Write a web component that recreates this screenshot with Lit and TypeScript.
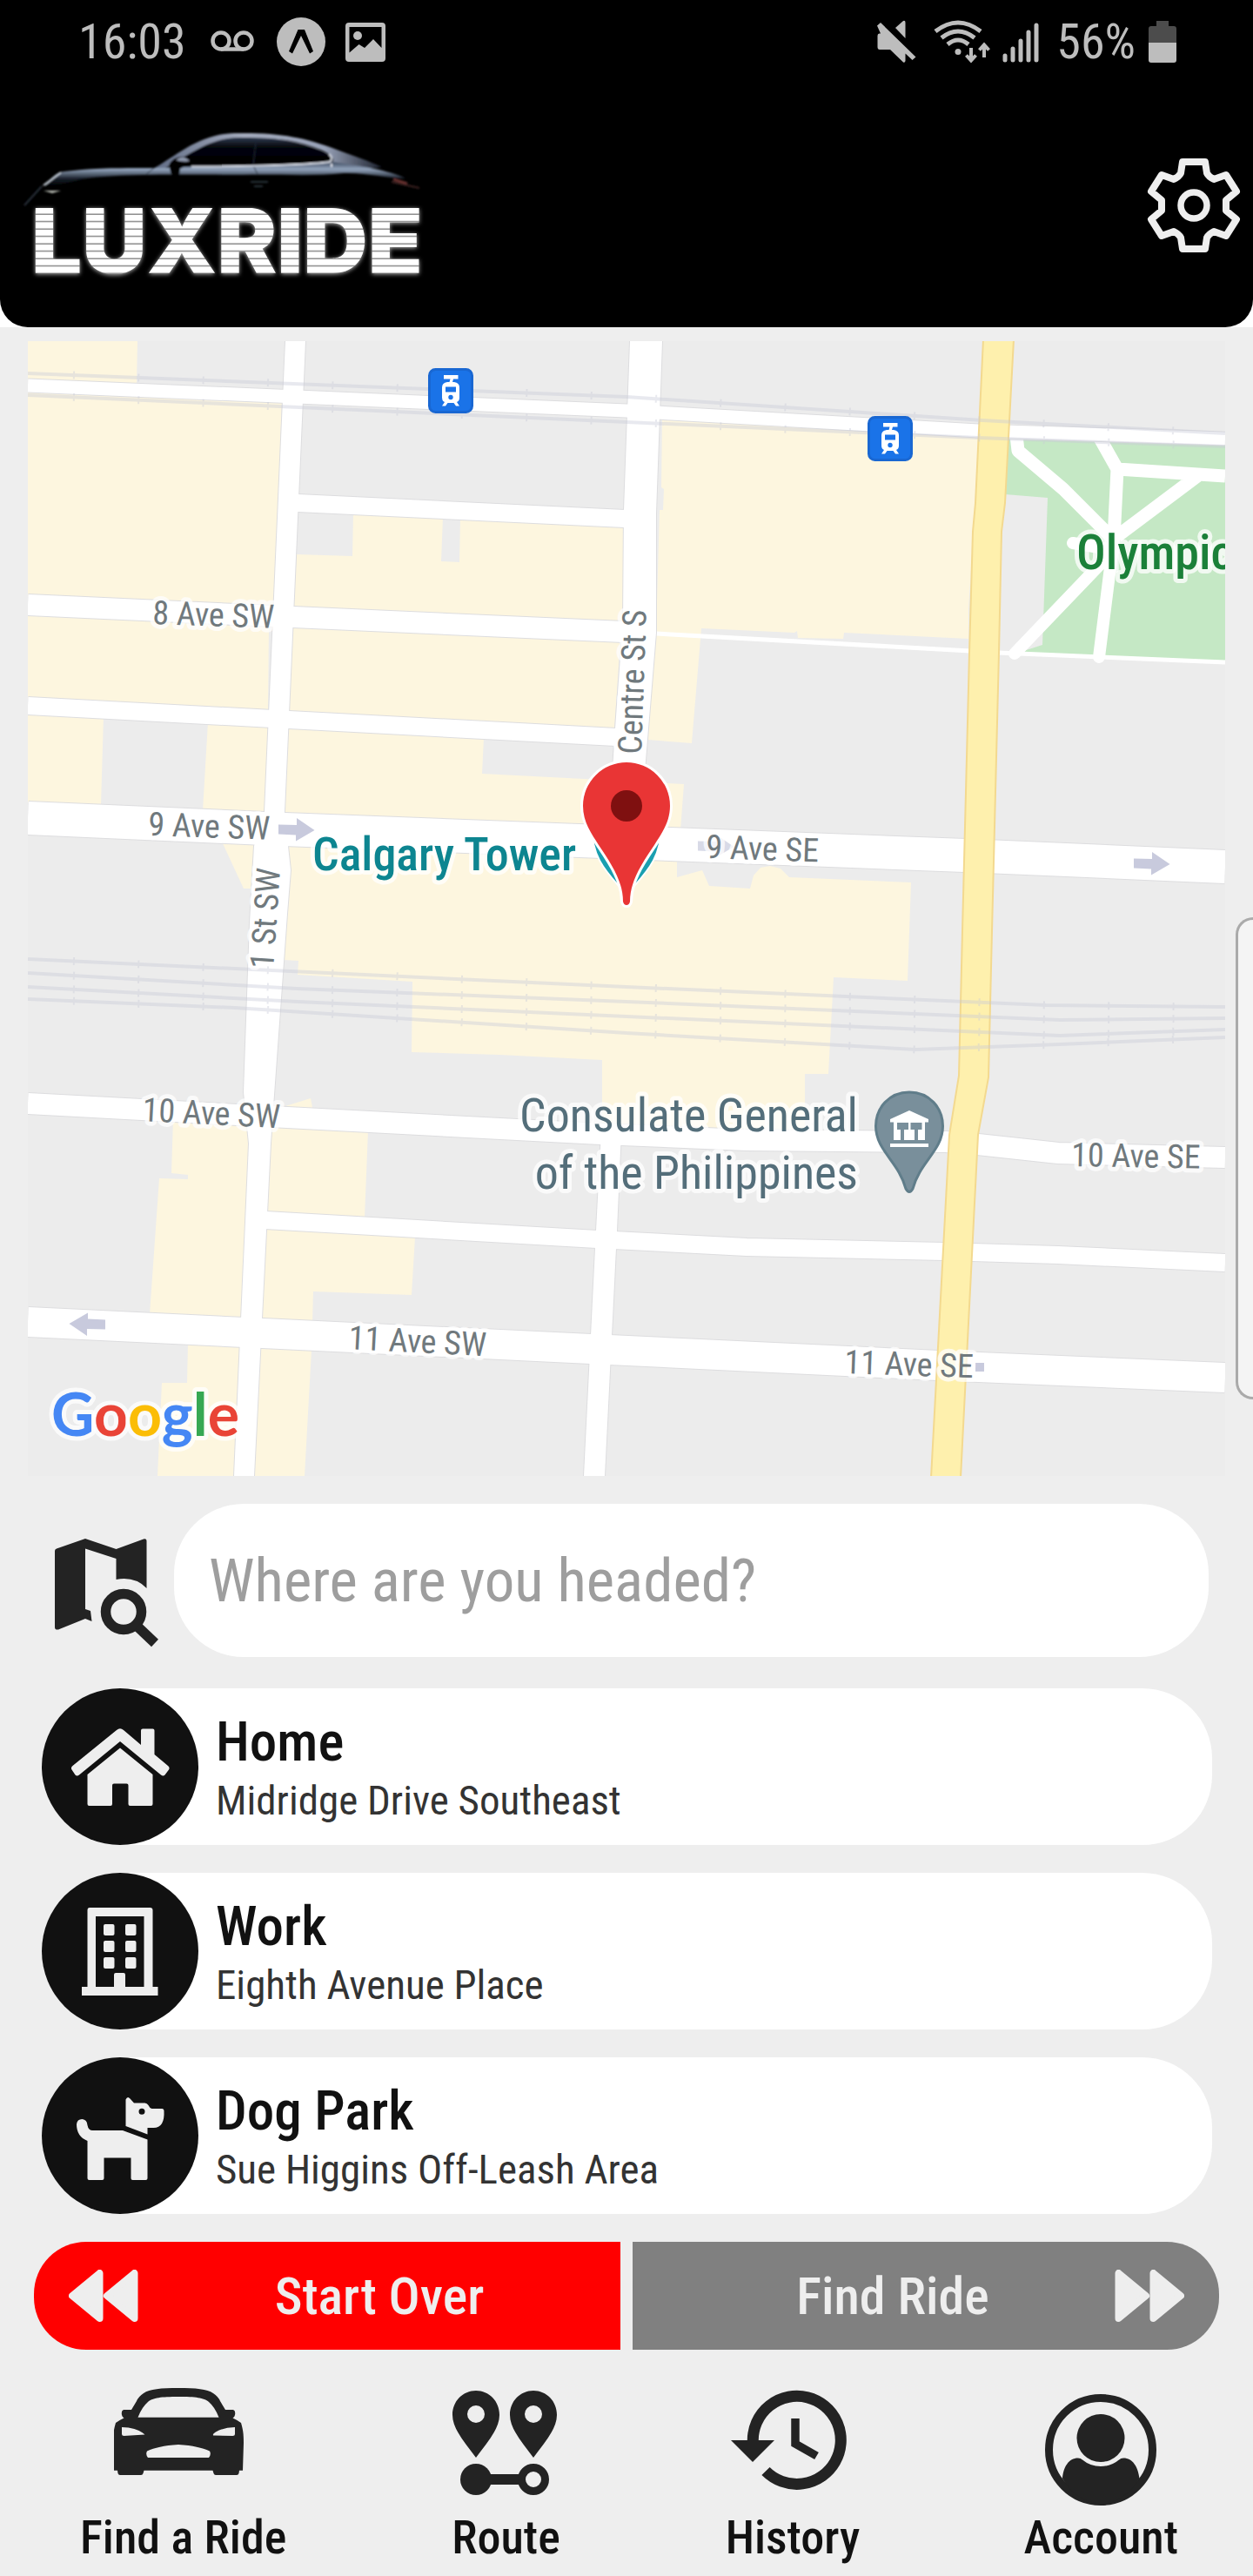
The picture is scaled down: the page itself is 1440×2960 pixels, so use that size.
import { LitElement, html, svg, css } from "lit";
import { customElement, state } from "lit/decorators.js";

type Place = { name: string; address: string; icon: unknown };
type Tab = { name: string; icon: unknown };

const homeIcon = svg`
  <path d="M86 48Q90 44.500 94 48L114 65V48.500Q114 46.500 116 46.500H127.500Q129.500 46.500 129.500 48.500V76L145 89Q147.500 91 146 93.500L141.500 99.500Q139.500 101.500 137 99.500L90 61L43 99.500Q40.500 101.500 38.500 99.500L34.500 93.500Q33 91 35.500 89Z"/>
  <path d="M90 68.500L127.500 99V133Q127.500 135 125.500 135H101.500Q99.500 135 99.500 133V111.500Q99.500 109.500 97.500 109.500H83Q81 109.500 81 111.500V133Q81 135 79 135H54.500Q52.500 135 52.500 133V99Z"/>`;

const workIcon = svg`
  <path fill-rule="evenodd" d="M55 40H124.500Q127.500 40 127.500 43V131H133.500V141H46V131H52.500V43Q52.500 40 55 40ZM62 50V131H83V117Q83 115 85 115H94Q96 115 96 117V131H117.500V50Z"/>
  ${[59, 78, 97].map((y) => svg`
    <rect x="71" y=${y} width="12.500" height="13" rx="2"/>
    <rect x="96" y=${y} width="12.500" height="13" rx="2"/>`)}`;

const dogIcon = svg`
  <path fill-rule="evenodd" d="M96.500 48.500Q98.500 44 101.500 47.500L106 52.500H118.500Q121 52.500 122.500 55Q124 58.500 126.500 59H138.500Q140.500 59 140.500 61.500Q141.500 81 128.500 81H121.500V88.500L96.500 79ZM115 58.800A3.500 3.500 0 1 0 115 65.800A3.500 3.500 0 1 0 115 58.800Z"/>
  <path d="M40 77Q40.500 71 46.500 71Q52 71.500 52.500 78Q53.500 84 58.500 84H93L121.500 94.500V139Q121.500 141 119.500 141H104.500Q102.500 141 102.500 139V115.500H71.500V139Q71.500 141 69.500 141H54.500Q52.500 141 52.500 139V96Q40 91 40 77Z"/>`;

const carIcon = svg`<g transform="translate(-1 4)">
  <path fill-rule="evenodd" d="M75 0C95 0 108 1 115 6Q121 10 123 15L129 25H138Q141 26 140 31Q139.500 33.500 137.500 34.500Q142 36.500 147 40C149.500 48 150 54 150 63L149 94.700H145L144.500 98Q144 100 142 100H118Q116 100 115.500 98L114.500 94.700H35.500L34.500 98Q34 100 32 100H8Q6 100 5.500 98L5 94.700H1L0 63C0 54 .5 48 3 40Q8 36.500 12.500 34.500Q10.500 33.500 10 31Q9 26 12 25H21L27 15Q29 10 35 6C42 1 55 0 75 0ZM75 10C55 10 46 11 40 16Q33 22 28.500 33.700H121.500Q117 22 110 16C104 11 95 10 75 10ZM10 45.500V53Q10 55 12.500 55L36.500 53.500Q28 45.500 10 45ZM140 45.500V53Q140 55 137.500 55L115 54.500Q114 53 118 50.500Q126 45.500 140 45ZM75 65C58 66 48 68.500 39 72.500Q37 76 40 80H110Q113 76 111 72.500C102 68.500 92 66 75 65Z"/></g>`;

const routeIcon = svg`<g transform="translate(19 7)">
  ${[27, 93].map((x) => svg`<path fill-rule="evenodd" transform="translate(${x} 0)" d="M0 0C15 0 27 12 27 28C27 44 12 61 0 77C-12 61 -27 44 -27 28C-27 12 -15 0 0 0ZM0 17A10 10 0 1 0 0 37A10 10 0 1 0 0 17Z"/>`)}
  <circle cx="27" cy="102" r="18"/>
  <rect x="40" y="96" width="40" height="12"/>
  <circle cx="93" cy="102" r="13.500" fill="none" stroke="#232323" stroke-width="9"/></g>`;

const historyIcon = svg`<g transform="translate(9 7)">
  <path fill="none" stroke="#232323" stroke-width="13" d="M25.300 58A50.500 50.500 0 1 1 40 92.500"/>
  <path d="M0 57H50L25 82Z"/>
  <path fill="none" stroke="#232323" stroke-width="9.500" d="M74 32V61L98.500 75"/></g>`;

const accountIcon = svg`<g transform="translate(16 11)">
  <circle cx="64" cy="64" r="59.500" fill="none" stroke="#232323" stroke-width="9"/>
  <circle cx="64" cy="50.500" r="27.500"/>
  <path d="M20 97C21 84 27 73.500 38 73.500Q41 73.500 43 75.500Q52 83 64 83Q76 83 85 75.500Q87 73.500 90 73.500C101 73.500 107 84 108.500 97Q92 124 64 126Q36 124 20 97Z"/></g>`;

const arrow = "M320 947.500L341 948V940L361.500 954L340 966.500V959.500L320 958.500Z";

const builtUp = [
  "32,392 158,392 157,441 32,441",
  "32,449 324,459 315,697 32,686",
  "32,705 309,718 308,818 32,803",
  "32,819 119,823 116,925 32,922",
  "239,830 308,834 304,935 233,931",
  "341,637 405,639 406,590 509,594 507,645 528,646 529,596 717,604 717,716 337,699",
  "336,719 713,736 706,839 332,819",
  "331,836 556,848 554,889 786,901 782,954 327,936",
  "761,480 1126,500 1113,700 1113,734 970,727 969,734 917,733 916,725 913,727 806,722 795,854 744,850 754,727 758,586 762,586 763,562 760,560",
  "254,965 294,965 290,1021 280,1021",
  "328,968 680,984 778,988 778,1008 807,1000 815,1018 862,1021 866,1006 874,997 885,995 897,998 907,1008 1047,1014 1043,1127 958,1123 952,1234 925,1234 925,1308 692,1300 692,1218 574,1212 473,1209 474,1128 342,1120 343,1104 326,1103",
  "328,1276 328,1271 357,1262 360,1278",
  "199,1286 284,1290 288,1310 279,1516 172,1510 183,1354 216,1355 216,1350 197,1348",
  "309,1294 423,1299 419,1399 306,1393",
  "305,1411 477,1421 473,1488 360,1484 359,1520 300,1516",
  "216,1543 278,1547 269,1696 181,1696 186,1589 215,1589",
  "297,1548 358,1551 350,1696 290,1696",
];

const roads: [string, number][] = [
  ["M342 578L718 596", 20],
  ["M32 695L337 709L717 726", 24],
  ["M32 811L332 827L708 847", 20],
  ["M32 940L327 953L770 970L1109 983L1408 996", 38],
  ["M32 1268L330 1284L690 1303L858 1310L1087 1312L1124 1315L1216 1325L1408 1330", 24],
  ["M305 1402L686 1424L858 1433L1085 1438L1216 1442L1408 1451", 20],
  ["M32 1519L302 1532L679 1550L1078 1569L1408 1583", 34],
  ["M32 443L720 472L1124 495L1408 504", 15],
];

const verticals = [
  "328,392 304,933 292,972 287,1060 280,1255 286,1314 269,1696 292,1696 311,1314 315,1258 330,1050 334,1000 331,972 327,933 351,392",
  "724,392 717,586 716,714 707,837 703,900 740,900 742,874 754,727 754,590 761,392",
  "691,1300 685,1414 671,1696 695,1696 709,1414 714,1300",
];

const rails = [
  "M32 429L720 456L1129 483L1408 498",
  "M32 454L720 485L1124 503L1408 513",
  "M32 1102L720 1134L1202 1155L1408 1157",
  "M32 1118L341 1136L720 1151L1218 1172L1408 1170",
  "M32 1134L342 1151L720 1168L1218 1190L1408 1183",
  "M32 1148L270 1158L720 1187L1052 1206L1218 1200L1408 1192",
];

const streets: [string, number, number, number][] = [
  ["8 Ave SW", 175, 717, 2],
  ["9 Ave SW", 170, 960, 2],
  ["9 Ave SE", 811, 986, 2],
  ["10 Ave SW", 163, 1288, 3],
  ["10 Ave SE", 1231, 1340, 1],
  ["11 Ave SW", 400, 1550, 3],
  ["11 Ave SE", 970, 1578, 2],
  ["Centre St S", 737, 867, -88],
  ["1 St SW", 314, 1114, -86],
];

const station = (x: number, y: number) => svg`<g transform="translate(${x} ${y})">
  <rect x="1.500" y="1.500" width="49" height="49" rx="7" fill="#1a73e8" stroke="#1967d2" stroke-width="3"/>
  <path fill="#fff" d="M18 8H34.500V12.500H29L28 16H30Q36 17 36 22V34Q36 38 33 39L36 43.500H32L29.500 40H22.500L20 43.500H16L19 39Q16 38 16 34V22Q16 17 22 16H24.500L25.500 12.500H18Z"/>
  <rect x="20" y="21.500" width="12" height="6" fill="#1a73e8"/>
  <circle cx="26" cy="33.500" r="2.700" fill="#1a73e8"/></g>`;

@customElement("luxride-map")
export class LuxrideMap extends LitElement {
  static styles = css`
    :host { display: block; }
    .map { display: block; width: 100%; height: auto; font-family: "Roboto Condensed", Roboto, sans-serif; }
    .area { fill: #fdf6df; }
    .casing { stroke: #dddddf; fill: none; }
    .road { stroke: #fff; fill: none; }
    .label { paint-order: stroke; stroke: rgba(255, 255, 255, 0.75); stroke-width: 10px; stroke-linejoin: round; }
    .street { font-size: 38px; fill: #70797d; }
    .poi { font-size: 54px; fill: #546e7a; }
    .tower { font-size: 54px; font-weight: 500; fill: #0d8590; }
    .park { font-size: 56px; font-weight: 500; fill: #1b8039; }
    .google { font-family: Lato, sans-serif; font-size: 68px; font-weight: 700; }
  `;
  render() {
    return html`<svg class="map" viewBox="32 392 1376 1304" role="img" aria-label="Map around Calgary Tower">
      <rect x="32" y="392" width="1376" height="1304" fill="#ececec"/>
      ${builtUp.map((p) => svg`<polygon class="area" points=${p}/>`)}
      <path fill="#c5e8c5" d="M1156 505L1408 510V760L1170 750L1198 741L1204 572L1155 568Z"/>
      <path fill="none" stroke="#fff" stroke-width="5" d="M754 728L1115 748M1147 750L1408 761"/>
      <g fill="none" stroke="#fff" stroke-width="15" stroke-linejoin="round">
        <path d="M1168 500L1170 518L1222 562L1280 620M1262 500L1284 539L1408 547M1284 539L1280 620M1376 547L1284 616"/>
        <path stroke-linecap="round" stroke-width="14" d="M1233 624L1280 632L1166 751M1280 620L1263 755"/>
      </g>
      ${verticals.map((p) => svg`<polygon points=${p} fill="#fff" stroke="#dddddf" stroke-width="2"/>`)}
      ${roads.map(([d, w]) => svg`<path class="casing" d=${d} stroke-width=${w + 2}/>`)}
      ${roads.map(([d, w]) => svg`<path class="road" d=${d} stroke-width=${w}/>`)}
      ${verticals.map((p) => svg`<polygon points=${p} fill="#fff"/>`)}
      <path fill="#fef0ad" stroke="#f3d98f" stroke-width="2" d="M1130 390L1121 578L1118 611L1114 750L1106 1070L1102 1236L1091 1304L1070 1698H1104L1124 1304L1136 1238L1140 1070L1148 750L1151 611L1155 578L1165 390Z"/>
      <g fill="none" stroke="#c8cad8" opacity="0.4">
        ${rails.map((d) => svg`<path d=${d} stroke-width="4"/><path d=${d} stroke-width="9" stroke-dasharray="2 72.400" stroke-dashoffset="-52"/>`)}
      </g>
      <g fill="#c8cadd">
        <path d=${arrow}/><path d=${arrow} transform="translate(983 39)"/>
        <path d=${arrow} transform="translate(482 19)" opacity="0.7"/>
        <path d=${arrow} transform="rotate(180 220.500 1237.500)"/>
        <rect x="1121" y="1566" width="10" height="10"/>
      </g>
      ${station(492, 423)}${station(997, 478)}
      ${streets.map(([t, x, y, r]) => svg`<text class="label street" transform="translate(${x} ${y}) rotate(${r})">${t}</text>`)}
      <text class="label tower" x="359" y="1000">Calgary Tower</text>
      <text class="label park" x="1237" y="654">Olympic</text>
      <text class="label poi" x="986" y="1300" text-anchor="end">Consulate General</text>
      <text class="label poi" x="986" y="1366" text-anchor="end">of the Philippines</text>
      <path fill="#798f9b" stroke="#607d8a" stroke-width="3" d="M1045 1255C1068 1255 1083.500 1273 1083.500 1294C1083.500 1322 1057 1335 1049 1366Q1045 1373 1041 1366C1033 1335 1006.500 1322 1006.500 1294C1006.500 1273 1022 1255 1045 1255Z"/>
      <path fill="#fff" fill-rule="evenodd" d="M1023 1286L1045 1276L1067 1286V1289.500H1063V1310H1027V1289.500H1023ZM1031 1290V1298H1044V1290ZM1046.500 1290V1298H1059.500V1290ZM1035 1298V1310H1039V1298ZM1051 1298V1310H1055V1298Z"/>
      <rect x="1023" y="1314" width="44" height="4" fill="#fff"/>
      <path fill="#1a9fb0" stroke="#fff" stroke-width="2" d="M680 950C680 982 694 999 711 1018H729C746 999 760 982 760 950Z"/>
      <path fill="#e93535" stroke="#fff" stroke-width="6" paint-order="stroke" d="M670 926A50 50 0 0 1 770 926C770 945 760 958 752 971C738 992 724 1012 724 1036Q723 1040 720 1040Q717 1040 716 1036C716 1012 702 992 688 971C680 958 670 945 670 926Z"/>
      <circle cx="720" cy="926" r="18" fill="#7f1010"/>
      <text class="label google" x="59" y="1650"><tspan fill="#4587f4">G</tspan><tspan fill="#e94437">o</tspan><tspan fill="#fbbd06">o</tspan><tspan fill="#4587f4">g</tspan><tspan fill="#37a853">l</tspan><tspan fill="#e94437">e</tspan></text>
    </svg>`;
  }
}

@customElement("app-root")
export class AppRoot extends LitElement {
  static styles = css`
    :host {
      display: block;
      position: relative;
      overflow: hidden;
      background: #eee;
      color: #111;
      font-family: "Roboto Condensed", Roboto, "Liberation Sans", sans-serif;
    }
    * { box-sizing: border-box; }
    button, input { font: inherit; color: inherit; border: 0; margin: 0; padding: 0; background: none; }
    svg { display: block; flex: none; }
    .top { background: #fff; }
    .header { background: #000; border-radius: 0 0 32px 32px; }
    .status {
      display: flex; align-items: center; height: 96px; padding: 0 88px 0 90px;
      color: #bdbdbd; font-size: 56px; line-height: 64px;
    }
    .notices, .signals { display: flex; align-items: center; }
    .notices { flex: 1; gap: 22px; }
    .signals { gap: 15px; }
    .strength { margin: 0 4px 0 -4px; }
    .brand { display: flex; align-items: center; justify-content: space-between; height: 280px; padding: 0 10px 0 20px; }
    .word { font-family: Inter, "Liberation Sans", sans-serif; font-weight: 900; font-size: 103px; }
    .content { display: flex; flex-direction: column; padding: 16px 32px 0; }
    .search { display: flex; align-items: center; gap: 18px; height: 176px; margin: 32px 19px 36px 12px; }
    .search-icon { margin: 28px 0 0 19px; }
    .field {
      flex: 1; min-width: 0; height: 176px; padding: 0 40px;
      border-radius: 80px; background: #fff; font-size: 69px;
    }
    .field::placeholder { color: #9e9e9e; opacity: 1; }
    .places { display: flex; flex-direction: column; gap: 32px; margin: 0 15px 0 16px; padding: 0; list-style: none; }
    .place {
      display: flex; align-items: center; gap: 20px; width: 100%; height: 180px;
      border-radius: 90px 80px 80px 90px; background: #fff; text-align: left;
    }
    .disc { border-radius: 50%; background: #111; fill: #eee; }
    .lines { display: flex; flex-direction: column; padding-top: 2px; }
    .name { font-size: 63px; line-height: 76px; font-weight: 500; }
    .address { font-size: 47px; line-height: 58px; color: #333; }
    .actions { display: grid; grid-template-columns: 1fr 1fr; gap: 14px; margin: 32px 7px 0; }
    .action { display: flex; align-items: center; height: 124px; color: #eee; fill: #eee; font-size: 60px; font-weight: 500; }
    .over { padding-left: 40px; background: #f00; border-radius: 60px 0 0 60px; }
    .find { padding: 0 40px 0 44px; background: #808080; border-radius: 0 60px 60px 0; }
    .caption { flex: 1; text-align: center; }
    .tabs { display: flex; justify-content: space-between; padding: 40px 86px 12px 92px; }
    .tab { display: flex; flex-direction: column; align-items: center; color: #111; fill: #232323; font-size: 54px; line-height: 64px; font-weight: 500; text-decoration: none; }
    .tab-icon { margin: 0 -16px; }
    .handle {
      position: absolute; top: 1054px; right: 0; width: 20px; height: 554px;
      border: 3px solid #aaa; border-right: 0; border-radius: 20px 0 0 20px; background: #f4f4f4;
    }
  `;

  @state() private destination = "";

  private places: Place[] = [
    { name: "Home", address: "Midridge Drive Southeast", icon: homeIcon },
    { name: "Work", address: "Eighth Avenue Place", icon: workIcon },
    { name: "Dog Park", address: "Sue Higgins Off-Leash Area", icon: dogIcon },
  ];

  private tabs: Tab[] = [
    { name: "Find a Ride", icon: carIcon },
    { name: "Route", icon: routeIcon },
    { name: "History", icon: historyIcon },
    { name: "Account", icon: accountIcon },
  ];

  private renderStatus() {
    return html`<div class="status">
      <div class="notices">
        <span>16:03</span>
        <svg width="60" height="56" viewBox="-4 0 60 56" fill="none" stroke="#bdbdbd" stroke-width="4.500"><ellipse cx="14" cy="27" rx="9.500" ry="9.500"/><ellipse cx="40" cy="27" rx="9.500" ry="9.500"/><path d="M14 36.500H40"/></svg>
        <svg width="56" height="56" viewBox="0 0 56 56"><circle cx="28" cy="28" r="28" fill="#bdbdbd"/><path d="M24.500 14H32L42 39L38 41.500L28 21L18 41.500L14 39Z"/></svg>
        <svg width="48" height="48" viewBox="0 0 48 48"><rect x="1" y="2" width="46" height="45" rx="4" fill="#bdbdbd"/><path d="M5.500 7H42.500V31L33 21L23 31L16.500 27L5.500 36.500Z"/><circle cx="15" cy="17" r="5" fill="#bdbdbd"/></svg>
      </div>
      <div class="signals">
        <svg width="50" height="50" viewBox="0 0 50 50" fill="#bdbdbd"><path d="M5 3L1 6.500L5 15.500H3.500Q1.500 15.500 1.500 18V31Q1.500 34 4 34H16L31 48.500Q33 49.500 33.500 47V38.500L41.500 46L45.500 42.500Z"/><path d="M22 9L31 1Q33.500 0 33.500 3V21Z"/></svg>
        <svg width="68" height="50" viewBox="0 0 68 50" fill="none" stroke="#bdbdbd" stroke-width="5"><path d="M3 13Q29 -7 55 13M10 20.500Q29 5.500 48 20.500M17 28Q29 18 41 28"/><circle cx="29" cy="36.500" r="3.500" fill="#bdbdbd" stroke="none"/><path stroke-width="4" d="M44 32V46M38.500 40.500L44 46.500L49.500 40.500M59 43V29M53.500 34.500L59 28.500L64.500 34.500"/></svg>
        <svg class="strength" width="44" height="50" viewBox="0 0 44 50" stroke="#bdbdbd" stroke-width="5" stroke-linecap="round"><path d="M4 41V46M13 33V46M22 24V46M31 14V46M40 6V46"/></svg>
        <span>56%</span>
        <svg width="32" height="50" viewBox="0 0 32 50"><path fill="#4c4c4c" d="M9 1H23V7H29Q32 7 32 10V26H0V10Q0 7 3 7H9Z"/><path fill="#bdbdbd" d="M0 26H32V46Q32 49 29 49H3Q0 49 0 46Z"/></svg>
      </div>
    </div>`;
  }

  private renderLogo() {
    return html`<svg width="480" height="208" viewBox="0 -8 480 208" role="img" aria-label="Luxride">
      <defs>
        <linearGradient id="roof" x1="0" y1="0" x2="1" y2="0"><stop offset="0" stop-color="#5f6b84"/><stop offset=".4" stop-color="#a4abbd"/><stop offset=".75" stop-color="#98a2b8"/><stop offset="1" stop-color="#1d2330"/></linearGradient>
        <linearGradient id="body" x1="0" y1="0" x2="0" y2="1"><stop offset="0" stop-color="#3a475c"/><stop offset=".3" stop-color="#94a5bd"/><stop offset=".7" stop-color="#161d28"/><stop offset="1" stop-color="#000"/></linearGradient>
        <linearGradient id="glass" x1="0" y1="0" x2="0" y2="1"><stop offset="0" stop-color="#35415c"/><stop offset=".35" stop-color="#05070b"/><stop offset="1" stop-color="#000"/></linearGradient>
        <pattern id="bands" width="20" height="8.500" y="98.300" patternUnits="userSpaceOnUse"><rect width="20" height="8.500" fill="#777"/><rect width="20" height="7.200" fill="#fff"/></pattern>
        <filter id="soft"><feGaussianBlur stdDeviation="0.800"/></filter>
        <filter id="glow" x="-5%" y="-15%" width="110%" height="130%"><feDropShadow dx="0" dy="1" stdDeviation="2.500" flood-color="#fff" flood-opacity="0.700"/></filter>
      </defs>
      <g filter="url(#soft)">
        <path fill="url(#glass)" d="M166 54C200 30 222 16 255 16C300 16 340 27 362 40V48L200 52Z"/>
        <path fill="url(#roof)" d="M154 55C185 38 208 14 250 13C300 12 330 18 362 30C385 39 405 45 419 52C400 54 380 54 362 52V46C366 40 355 34 340 29C315 20 290 18 255 18C222 18 200 36 168 54Z"/>
        <path fill="url(#body)" d="M32 74C38 64 44 58 54 57C90 52 140 53 160 53L215 51C270 50 320 51 362 46C390 50 430 56 446 65C425 65 400 58 375 59C340 63 300 60 260 61C200 61 100 59 70 67C55 71 45 74 32 74Z"/>
        <path fill="none" stroke="#222a38" d="M274 23L271 50L276 60M148 60L157 53"/>
        <path fill="none" stroke="#d7dce6" stroke-width="2" d="M200 51.500C280 51 330 50 359 46Q364 42 358 37M361 48V52"/>
        <path fill="#000" d="M174 50Q178 40 190 40Q199 40 198 48L187 54L186 61H177Z"/>
        <path fill="#8d97ac" d="M182 44Q190 37 198 45Q192 47 182 44Z"/>
        <path fill="none" stroke="#c9d2dd" stroke-width="2" d="M30 73L50 58"/>
        <path fill="none" stroke="#2a303b" stroke-width="2" d="M8 96L28 74M268 69H288M272 74H282"/>
        <path fill="#b9bdb5" d="M30 79L50 79L40 82Z"/>
        <path fill="none" stroke="#6b3230" stroke-width="3" d="M432 66L448 71"/>
        <path fill="none" stroke="#3c2220" stroke-width="2" d="M430 69L462 76"/>
      </g>
      <text class="word" x="16" y="174" fill="url(#bands)" filter="url(#glow)">LUXRIDE</text>
    </svg>`;
  }

  render() {
    return html`
      <div class="top"><header class="header">
        ${this.renderStatus()}
        <div class="brand">
          ${this.renderLogo()}
          <button aria-label="Settings">
            <svg width="116" height="116" viewBox="-58 -58 116 116" fill="none" stroke="#eee" stroke-linejoin="round">
              <path stroke-width="8" d="M-13 -50H13L15 -37Q17 -33 23 -30L37 -35L49 -16L37 -6V6L49 16L37 35L23 30Q17 33 15 37L13 50H-13L-15 37Q-17 33 -23 30L-37 35L-49 16L-37 6V-6L-49 -16L-37 -35L-23 -30Q-17 -33 -15 -37Z"/>
              <circle r="15" stroke-width="7.500"/>
            </svg>
          </button>
        </div>
      </header></div>
      <main class="content">
        <luxride-map></luxride-map>
        <div class="search">
          <svg class="search-icon" width="119" height="125" viewBox="0 0 119 125" fill="#232323">
            <path d="M0 14Q0 12 2 11.500L35 0L70.500 12L102 .5Q105.500 -.5 105.500 3V57Q92 43 70.500 47V23L35 11.500V81L41 83L42.500 95L35 92L4 104.500Q0 105 0 102Z"/>
            <circle cx="79" cy="84" r="20.500" fill="none" stroke="#232323" stroke-width="11.500"/>
            <path stroke="#232323" stroke-width="11.500" d="M95 101L115 120"/>
          </svg>
          <input class="field" type="text" aria-label="Destination" placeholder="Where are you headed?"
            .value=${this.destination}
            @input=${(e: Event) => (this.destination = (e.target as HTMLInputElement).value)}>
        </div>
        <ul class="places">
          ${this.places.map((p) => html`<li><button class="place">
            <svg class="disc" width="180" height="180" viewBox="0 0 180 180">${p.icon}</svg>
            <span class="lines"><span class="name">${p.name}</span><span class="address">${p.address}</span></span>
          </button></li>`)}
        </ul>
        <div class="actions">
          <button class="action over">
            <svg width="80" height="60" viewBox="0 0 80 60" stroke="#eee" stroke-width="8" stroke-linejoin="round"><path d="M4 30L35.500 4V56ZM44 30L75.500 4V56Z"/></svg>
            <span class="caption">Start Over</span>
          </button>
          <button class="action find">
            <span class="caption">Find Ride</span>
            <svg width="80" height="60" viewBox="0 0 80 60" stroke="#eee" stroke-width="8" stroke-linejoin="round"><path d="M36 30L4.500 4V56ZM76 30L44.500 4V56Z"/></svg>
          </button>
        </div>
      </main>
      <nav class="tabs">
        ${this.tabs.map((t) => html`<a class="tab" href="#">
          <svg class="tab-icon" width="160" height="144" viewBox="0 0 160 144">${t.icon}</svg>
          <span>${t.name}</span>
        </a>`)}
      </nav>
      <div class="handle"></div>`;
  }
}
